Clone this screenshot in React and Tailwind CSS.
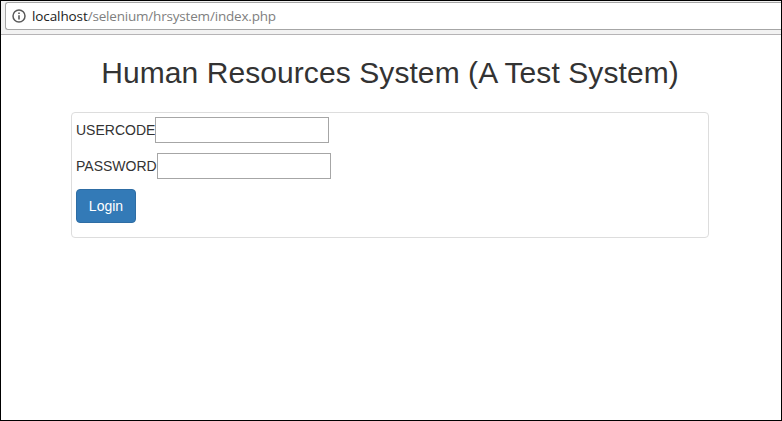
function AddressBar() {
  return (
    <div className="h-[34px] shrink-0 border-b border-[#b6b4b6] bg-[#f2f2f2] pl-1 pt-px">
      <div className="flex h-7 items-center rounded-l-[3px] border border-r-0 border-[#a6a6a6] bg-white pl-1.5">
        <svg className="mr-[6px] h-[14px] w-[14px] shrink-0" viewBox="0 0 14 14" fill="none">
          <circle cx="7" cy="7" r="6" stroke="#5a5a5a" strokeWidth="1.5" />
          <path d="M7 6.2V10.4M7 3.5V5.1" stroke="#5a5a5a" strokeWidth="1.6" />
        </svg>
        <span className="whitespace-nowrap font-['Open_Sans','Noto_Sans',sans-serif] text-[13.5px] leading-5 tracking-[-0.19px] text-[#808080]">
          <span className="tracking-[-0.1px] text-[#222]">localhost</span>/selenium/hrsystem/index.php
        </span>
      </div>
    </div>
  );
}

function Field({ label, type }) {
  return (
    <label className="mb-2.5 flex h-[26px] items-center">
      <span>{label}</span>
      <input type={type} className="h-[26px] w-[174px] border border-[#a6a6a6] bg-white px-1 outline-none" />
    </label>
  );
}

export default function App() {
  return (
    <div className="flex h-[421px] w-[782px] flex-col overflow-hidden border border-black bg-white font-['Liberation_Sans',Arial,sans-serif] text-sm text-[#333]">
      <AddressBar />
      <main className="mx-[70px] w-[638px]">
        <h1 className="mt-[21px] h-14 whitespace-nowrap text-center text-[30px] leading-[33px] tracking-[0.08px]">
          Human Resources System (A Test System)
        </h1>
        <form className="h-[126px] rounded border border-[#ddd] p-1">
          <Field label="USERCODE" type="text" />
          <Field label="PASSWORD" type="password" />
          <button
            type="button"
            className="h-[34px] w-[60px] rounded border border-[#2e6da4] bg-[#337ab7] text-sm leading-5 text-white"
          >
            Login
          </button>
        </form>
      </main>
    </div>
  );
}
